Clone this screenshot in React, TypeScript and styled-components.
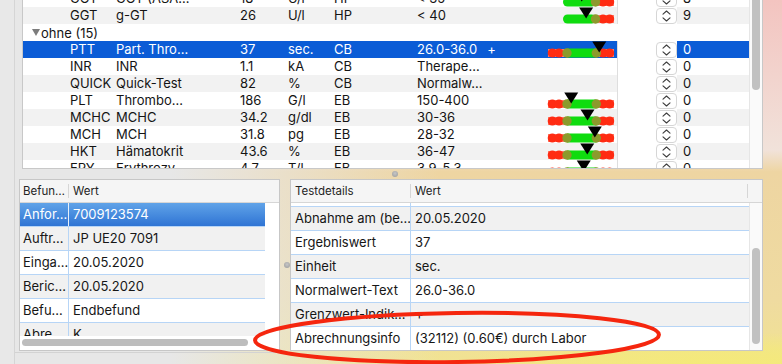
import React from "react";
import styled, { createGlobalStyle } from "styled-components";

const GlobalStyle = createGlobalStyle`
  html, body { margin: 0; padding: 0; }
  body {
    font-family: Inter, "Noto Sans", "Liberation Sans", sans-serif;
    -webkit-font-smoothing: antialiased;
  }
`;

type GaugeSpec = { open?: boolean; lo: number; hi: number; v: number };

type LabItem = {
  kind: "lab";
  code: string;
  name: string;
  value: string;
  unit: string;
  src: string;
  normal: string;
  flag?: string;
  gauge?: GaugeSpec;
  count: string;
  selected?: boolean;
};

type GroupItem = { kind: "group"; label: string };

const items: (LabItem | GroupItem)[] = [
  { kind: "lab", code: "GOT", name: "GOT (ASA…", value: "18", unit: "U/l", src: "HP", normal: "< 35", gauge: { open: true, lo: 0, hi: 35, v: 18 }, count: "8" },
  { kind: "lab", code: "GGT", name: "g-GT", value: "26", unit: "U/l", src: "HP", normal: "< 40", gauge: { open: true, lo: 0, hi: 40, v: 26 }, count: "9" },
  { kind: "group", label: "ohne (15)" },
  { kind: "lab", code: "PTT", name: "Part. Thro…", value: "37", unit: "sec.", src: "CB", normal: "26.0-36.0", flag: "+", gauge: { lo: 26, hi: 36, v: 37 }, count: "0", selected: true },
  { kind: "lab", code: "INR", name: "INR", value: "1.1", unit: "kA", src: "CB", normal: "Therape…", count: "0" },
  { kind: "lab", code: "QUICK", name: "Quick-Test", value: "82", unit: "%", src: "CB", normal: "Normalw…", count: "0" },
  { kind: "lab", code: "PLT", name: "Thrombo…", value: "186", unit: "G/l", src: "EB", normal: "150-400", gauge: { lo: 150, hi: 400, v: 186 }, count: "0" },
  { kind: "lab", code: "MCHC", name: "MCHC", value: "34.2", unit: "g/dl", src: "EB", normal: "30-36", gauge: { lo: 30, hi: 36, v: 34.2 }, count: "0" },
  { kind: "lab", code: "MCH", name: "MCH", value: "31.8", unit: "pg", src: "EB", normal: "28-32", gauge: { lo: 28, hi: 32, v: 31.8 }, count: "0" },
  { kind: "lab", code: "HKT", name: "Hämatokrit", value: "43.6", unit: "%", src: "EB", normal: "36-47", gauge: { lo: 36, hi: 47, v: 43.6 }, count: "0" },
  { kind: "lab", code: "ERY", name: "Erythrozy…", value: "4.7", unit: "T/l", src: "EB", normal: "3.9-5.3", gauge: { lo: 3.9, hi: 5.3, v: 4.7 }, count: "0" },
];

const befund = [
  ["Anfor…", "7009123574"],
  ["Auftr…", "JP UE20 7091"],
  ["Einga…", "20.05.2020"],
  ["Beric…", "20.05.2020"],
  ["Befu…", "Endbefund"],
  ["Abre…", "K"],
];

const details = [
  ["", ""],
  ["Abnahme am (be…", "20.05.2020"],
  ["Ergebniswert", "37"],
  ["Einheit", "sec."],
  ["Normalwert-Text", "26.0-36.0"],
  ["Grenzwert-Indik…", "+"],
  ["Abrechnungsinfo", "(32112) (0.60€) durch Labor"],
];

// red / green dotted range bar with a black pointer
const Gauge: React.FC<{ g: GaugeSpec }> = ({ g }) => {
  const start = g.open ? 17 : 19;
  const end = g.open ? 49.5 : 48.3;
  const frac = (g.v - g.lo) / (g.hi - g.lo);
  const pos = 4 + start + frac * (end - start);
  return (
    <svg width={73} height={17} viewBox="0 0 73 17">
      <g transform="translate(4 7)">
        {!g.open && <rect x={0} y={1} width={19} height={8} fill="#ff7a68" />}
        {!g.open && [4.3, 11].map((cx) => <circle key={cx} cx={cx} cy={5} r={4.6} fill="#ff2b12" />)}
        <rect x={g.open ? 15 : 19} y={0.5} width={g.open ? 33 : 29.3} height={9} rx={g.open ? 4.5 : 0} fill="#0fdc0f" />
        <rect x={48} y={1} width={18} height={8} fill="#ff7a68" />
        {[55, 61.6].map((cx) => <circle key={cx} cx={cx} cy={5} r={4.6} fill="#ff2b12" />)}
        {!g.open && <circle cx={19} cy={5} r={4.7} fill="#8c9a2c" />}
        <circle cx={g.open ? 47.5 : 48.3} cy={5} r={4.7} fill="#8c9a2c" />
      </g>
      <polygon points={`${pos - 7},0.5 ${pos + 7},0.5 ${pos},11.5`} fill="#000" />
    </svg>
  );
};

const Chevrons = () => (
  <svg width={19} height={14} viewBox="0 0 19 14">
    <path d="M6 5.2 L9.5 2 L13 5.2 M6 8.8 L9.5 12 L13 8.8" stroke="#3c3c3c" strokeWidth={1.1} fill="none" strokeLinecap="round" strokeLinejoin="round" />
  </svg>
);

const Disclosure = () => (
  <svg width={8} height={7} viewBox="0 0 8 7">
    <polygon points="0,0 8,0 4,7" fill="#7c7c7c" />
  </svg>
);

export default function App() {
  return (
    <>
      <GlobalStyle />
      <Window>
        <Sidebar />
        <Main>
          <TopPane>
            <Outline>
              <OutlineBody>
                <OutlineRows>
                  {items.map((it, i) =>
                    it.kind === "group" ? (
                      <GroupRow key={i}>
                        <Disclosure />
                        <span>{it.label}</span>
                      </GroupRow>
                    ) : (
                      <LabRow key={i} $striped={i % 2 === 1} $selected={!!it.selected}>
                        <Cell />
                        <Cell>{it.code}</Cell>
                        <Cell>{it.name}</Cell>
                        <Cell>{it.value}</Cell>
                        <Cell>{it.unit}</Cell>
                        <Cell>{it.src}</Cell>
                        <Cell>
                          {it.normal}
                          {it.flag && <Flag>{it.flag}</Flag>}
                        </Cell>
                        <BarCell>{it.gauge && <Gauge g={it.gauge} />}</BarCell>
                        <SpacerCell />
                        <StepperCell>
                          <StepperBox>
                            <Chevrons />
                          </StepperBox>
                        </StepperCell>
                        <CountCell>{it.count}</CountCell>
                      </LabRow>
                    )
                  )}
                </OutlineRows>
              </OutlineBody>
              <ScrollTrack>
                <ScrollThumb $top={-6} $h={96} />
              </ScrollTrack>
            </Outline>
          </TopPane>

          <HSplit>
            <Knob />
          </HSplit>

          <BottomPane>
            <GroupBox>
              <DetailBox $w={261}>
                <DetailHead $first={49} $tail={0}>
                  <HeadCell $pad={3} $divider>Befun…</HeadCell>
                  <HeadCell $pad={4}>Wert</HeadCell>
                </DetailHead>
                <LeftBody>
                  <LeftRowsWrap>
                    <RowsArea $w={245}>
                      {befund.map(([k, v], i) => (
                        <DetailRow key={i} $first={49} $striped={i % 2 === 1} $selected={i === 0}>
                          <KeyCell $pad={3} $selected={i === 0}>{k}</KeyCell>
                          <ValCell>{v}</ValCell>
                        </DetailRow>
                      ))}
                    </RowsArea>
                  </LeftRowsWrap>
                  <HScroll>
                    <HThumb />
                  </HScroll>
                </LeftBody>
              </DetailBox>
            </GroupBox>

            <VSplit>
              <Knob />
            </VSplit>

            <DetailBox $w={473}>
              <DetailHead $first={120} $tail={14}>
                <HeadCell $pad={4} $divider>Testdetails</HeadCell>
                <HeadCell $pad={4} $divider>Wert</HeadCell>
                <HeadCell $pad={0} />
              </DetailHead>
              <RightBody>
                <RowsArea $w={458}>
                  <ScrolledRows>
                    {details.map(([k, v], i) => (
                      <DetailRow key={i} $first={120} $striped={i % 2 === 1} $selected={false}>
                        <KeyCell $pad={4} $selected={false}>{k}</KeyCell>
                        <ValCell>{v}</ValCell>
                      </DetailRow>
                    ))}
                  </ScrolledRows>
                </RowsArea>
                <ScrollTrack>
                  <ScrollThumb $top={45} $h={96} />
                </ScrollTrack>
              </RightBody>
            </DetailBox>
          </BottomPane>
        </Main>

        <Annotation width={782} height={364} viewBox="0 0 782 364">
          <ellipse cx={457} cy={337.5} rx={202} ry={24.5} transform="rotate(-0.8 457 337.5)" fill="none" stroke="#f5260e" strokeWidth={4} />
        </Annotation>
      </Window>
    </>
  );
}

const Window = styled.div`
  position: relative;
  display: flex;
  width: 782px;
  height: 364px;
  overflow: hidden;
  background:
    radial-gradient(260px 34px at 720px 366px, #f4ea78 0%, rgba(244, 234, 120, 0.6) 55%, rgba(244, 234, 120, 0) 100%),
    linear-gradient(to right, #e7e7e7 0, #e7e7e7 170px, rgba(231, 231, 231, 0) 440px),
    linear-gradient(to bottom, #f3c4c0 0, #f1e2da 150px, #eed5a2 172px, #efdba0 300px, #f1e391 364px);
`;

const Sidebar = styled.div`
  width: 14px;
  flex-shrink: 0;
  background: #e8e8e8;
  border-right: 1px solid #d5d5d5;
`;

const Main = styled.div`
  display: flex;
  flex-direction: column;
  width: 767px;
`;

const TopPane = styled.div`
  height: 169px;
  padding: 0 19px 0 7px;
  box-sizing: border-box;
`;

const Outline = styled.div`
  display: flex;
  height: 169px;
  box-sizing: border-box;
  border: 1px solid #c8c8c8;
  border-top: none;
  background: #fff;
`;

const OutlineBody = styled.div`
  flex: 1;
  overflow: hidden;
`;

const OutlineRows = styled.div`
  margin-top: -10px;
`;

const LabRow = styled.div<{ $striped: boolean; $selected: boolean }>`
  display: grid;
  grid-template-columns: 43px 46px 124px 48px 46px 83px 131px 73px 39px 21px 1fr;
  height: 17px;
  font-size: 13px;
  line-height: 17px;
  color: ${(p) => (p.$selected ? "#fff" : "#141414")};
  background: ${(p) => (p.$selected ? "#0b5cd6" : p.$striped ? "#f2f2f2" : "#fff")};
`;

const Cell = styled.div`
  padding-left: 4px;
  white-space: nowrap;
  overflow: hidden;
`;

const Flag = styled.span`
  margin-left: 10px;
`;

const BarCell = styled.div`
  height: 17px;
  overflow: hidden;
`;

const SpacerCell = styled.div`
  background: #fff;
  border-left: 1px solid #dedede;
`;

const StepperCell = styled.div`
  display: flex;
  align-items: center;
  background: #fff;
`;

const StepperBox = styled.div`
  width: 21px;
  height: 16px;
  box-sizing: border-box;
  border: 1px solid #d6d6d6;
  border-radius: 4px;
  background: #fff;
  display: flex;
  align-items: center;
  justify-content: center;
`;

const CountCell = styled.div`
  padding-left: 6px;
`;

const GroupRow = styled.div`
  display: flex;
  align-items: center;
  gap: 1px;
  height: 17px;
  padding-left: 9px;
  font-size: 13px;
  color: #141414;
  background: #fff;
`;

const ScrollTrack = styled.div`
  width: 12px;
  flex-shrink: 0;
  background: #fafafa;
  border-left: 1px solid #e6e6e6;
  overflow: hidden;
`;

const ScrollThumb = styled.div<{ $top: number; $h: number }>`
  margin: ${(p) => p.$top}px 0 0 2px;
  width: 8px;
  height: ${(p) => p.$h}px;
  border-radius: 4px;
  background: #c1c1c1;
`;

const HSplit = styled.div`
  height: 10px;
  display: flex;
  align-items: center;
  padding-left: 377px;
`;

const Knob = styled.div`
  width: 6px;
  height: 6px;
  border-radius: 50%;
  background: radial-gradient(circle at 50% 40%, #c6c6c6, #9a9a9a);
`;

const BottomPane = styled.div`
  display: flex;
  align-items: flex-start;
`;

const GroupBox = styled.div`
  width: 268px;
  height: 174px;
  box-sizing: border-box;
  padding-left: 4px;
  border-bottom: 1px solid #d3d3d3;
`;

const VSplit = styled.div`
  width: 7px;
  height: 172px;
  display: flex;
  align-items: center;
  justify-content: center;
`;

const DetailBox = styled.div<{ $w: number }>`
  width: ${(p) => p.$w}px;
  height: 172px;
  box-sizing: border-box;
  border: 1px solid #c7c7c7;
  background: #fff;
  display: flex;
  flex-direction: column;
  overflow: hidden;
`;

const DetailHead = styled.div<{ $first: number; $tail: number }>`
  display: grid;
  grid-template-columns: ${(p) => `${p.$first}px 1fr ${p.$tail ? `${p.$tail}px` : ""}`};
  height: 23px;
  flex-shrink: 0;
  box-sizing: border-box;
  border-bottom: 1px solid #d6d6d6;
  background: #f5f5f5;
`;

const HeadCell = styled.div<{ $pad: number; $divider?: boolean }>`
  position: relative;
  padding-left: ${(p) => p.$pad}px;
  font-size: 11.5px;
  line-height: 22px;
  color: #242424;
  white-space: nowrap;
  &::after {
    content: "";
    display: ${(p) => (p.$divider ? "block" : "none")};
    position: absolute;
    right: 0;
    top: 4px;
    bottom: 4px;
    width: 1px;
    background: #d6d6d6;
  }
`;

const LeftBody = styled.div`
  flex: 1;
  display: flex;
  flex-direction: column;
  min-height: 0;
`;

const LeftRowsWrap = styled.div`
  flex: 1;
  min-height: 0;
  overflow: hidden;
`;

const RightBody = styled.div`
  flex: 1;
  display: flex;
  min-height: 0;
`;

const RowsArea = styled.div<{ $w: number }>`
  width: ${(p) => p.$w}px;
  overflow: hidden;
`;

const ScrolledRows = styled.div`
  margin-top: -20px;
`;

const DetailRow = styled.div<{ $first: number; $striped: boolean; $selected: boolean }>`
  display: grid;
  grid-template-columns: ${(p) => p.$first}px 1fr;
  height: 24px;
  box-sizing: border-box;
  border-bottom: 1px solid #b7d5f6;
  font-size: 13px;
  line-height: 23px;
  color: ${(p) => (p.$selected ? "#fff" : "#161616")};
  background: ${(p) =>
    p.$selected ? "linear-gradient(#60a3e8, #2f74d4)" : p.$striped ? "#f1f1f1" : "#fff"};
`;

const KeyCell = styled.div<{ $pad: number; $selected: boolean }>`
  padding-left: ${(p) => p.$pad}px;
  white-space: nowrap;
  overflow: hidden;
  border-right: 1px solid ${(p) => (p.$selected ? "#e6f0fb" : "#b7d5f6")};
`;

const ValCell = styled.div`
  padding-left: 4px;
  white-space: nowrap;
  overflow: hidden;
`;

const HScroll = styled.div`
  height: 14px;
  flex-shrink: 0;
  background: #fff;
  padding: 3px 0 0 2px;
  box-sizing: border-box;
`;

const HThumb = styled.div`
  width: 226px;
  height: 7px;
  border-radius: 4px;
  background: #bdbdbd;
`;

const Annotation = styled.svg`
  position: absolute;
  left: 0;
  top: 0;
  pointer-events: none;
`;
